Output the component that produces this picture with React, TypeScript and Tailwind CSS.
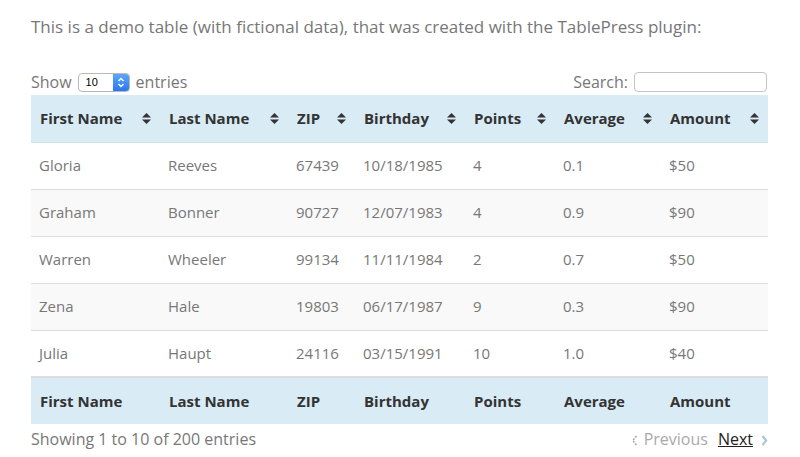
import React from 'react'

interface Row {
  first: string
  last: string
  zip: string
  birthday: string
  points: string
  average: string
  amount: string
}

const rows: Row[] = [
  { first: 'Gloria', last: 'Reeves', zip: '67439', birthday: '10/18/1985', points: '4', average: '0.1', amount: '$50' },
  { first: 'Graham', last: 'Bonner', zip: '90727', birthday: '12/07/1983', points: '4', average: '0.9', amount: '$90' },
  { first: 'Warren', last: 'Wheeler', zip: '99134', birthday: '11/11/1984', points: '2', average: '0.7', amount: '$50' },
  { first: 'Zena', last: 'Hale', zip: '19803', birthday: '06/17/1987', points: '9', average: '0.3', amount: '$90' },
  { first: 'Julia', last: 'Haupt', zip: '24116', birthday: '03/15/1991', points: '10', average: '1.0', amount: '$40' },
]

const columns = [
  { label: 'First Name', width: 'w-[129px]' },
  { label: 'Last Name', width: 'w-[128px]' },
  { label: 'ZIP', width: 'w-[67px]' },
  { label: 'Birthday', width: 'w-[110px]' },
  { label: 'Points', width: 'w-[90px]' },
  { label: 'Average', width: 'w-[106px]' },
  { label: 'Amount', width: 'w-[107px]' },
]

const SortIcon = () => (
  <svg width="9" height="11" viewBox="0 0 9 11" className="shrink-0">
    <path d="M4.5 0 L9 4.5 H0 Z" fill="#333" />
    <path d="M0 6.5 H9 L4.5 11 Z" fill="#333" />
  </svg>
)

const SelectBox = () => (
  <div className="flex h-[19px] w-[52px] items-stretch overflow-hidden rounded-[4px] border border-[#b9b9b9] bg-white">
    <span className="flex-1 pl-[7px] text-[11px] leading-[17px] text-black font-['Liberation_Sans',sans-serif]">10</span>
    <span className="flex w-[16px] items-center justify-center bg-gradient-to-b from-[#5da6fb] to-[#2a77f1]">
      <svg width="8" height="11" viewBox="0 0 8 11">
        <path d="M1.5 4 L4 1.5 L6.5 4 M1.5 7 L4 9.5 L6.5 7" stroke="#fff" strokeWidth="1.4" fill="none" />
      </svg>
    </span>
  </div>
)

export default function App() {
  return (
    <div className="h-[457px] w-[800px] bg-white font-['Open_Sans',sans-serif] text-[#777]">
      <div className="px-[31px] pt-[14px]">
        <p className="text-[17px] leading-[26px]">
          This is a demo table (with fictional data), that was created with the TablePress plugin:
        </p>

        <div className="mt-[31px] mr-[2px] flex items-center justify-between">
          <label className="flex items-center gap-[6px] text-[16px] leading-[22px]">
            Show <SelectBox /> entries
          </label>
          <label className="flex items-center gap-[6px] text-[16px] leading-[22px]">
            Search:
            <span className="h-[20px] w-[133px] rounded-[4px] border border-[#c4c4c4] bg-white" />
          </label>
        </div>

        <table className="mt-[2px] w-[737px] table-fixed border-collapse text-[15px]">
          <thead>
            <tr className="h-[47px] border-b border-[#cfe3ee] bg-[#d9ebf5]">
              {columns.map((c) => (
                <th key={c.label} className={`${c.width} px-[9px] text-left font-bold text-[#333]`}>
                  <div className="flex items-center justify-between">
                    <span>{c.label}</span>
                    <SortIcon />
                  </div>
                </th>
              ))}
            </tr>
          </thead>
          <tbody>
            {rows.map((r, i) => (
              <tr key={r.first} className={`h-[47px] border-t border-[#ddd] ${i % 2 === 1 ? 'bg-[#f9f9f9]' : 'bg-white'}`}>
                <td className="px-[8px]">{r.first}</td>
                <td className="px-[8px]">{r.last}</td>
                <td className="px-[8px]">{r.zip}</td>
                <td className="px-[8px]">{r.birthday}</td>
                <td className="px-[8px]">{r.points}</td>
                <td className="px-[8px]">{r.average}</td>
                <td className="px-[8px]">{r.amount}</td>
              </tr>
            ))}
          </tbody>
          <tfoot>
            <tr className="h-[47px] border-t-2 border-[#ddd] bg-[#d9ebf5]">
              {columns.map((c) => (
                <th key={c.label} className="px-[9px] text-left font-bold text-[#333]">
                  {c.label}
                </th>
              ))}
            </tr>
          </tfoot>
        </table>

        <div className="mt-[4px] flex items-center justify-between text-[16px] leading-[22px]">
          <span>Showing 1 to 10 of 200 entries</span>
          <div className="mr-[1px] flex items-center">
            {/* prev chevron */}
            <svg width="7" height="11" viewBox="0 0 7 11" className="mr-[6px] mt-[2px]">
              <path d="M5.5 1 L1.8 5.5 L5.5 10" stroke="#aaa" strokeWidth="1.6" fill="none" strokeDasharray="2 1.2" />
            </svg>
            <span className="text-[#aaa]">Previous</span>
            <span className="ml-[10px] text-[#222] underline">Next</span>
            <svg width="7" height="11" viewBox="0 0 7 11" className="ml-[8px] mt-[2px]">
              <path d="M1.5 1 L5.2 5.5 L1.5 10" stroke="#a9c3d9" strokeWidth="2" fill="none" />
            </svg>
          </div>
        </div>
      </div>
    </div>
  )
}
